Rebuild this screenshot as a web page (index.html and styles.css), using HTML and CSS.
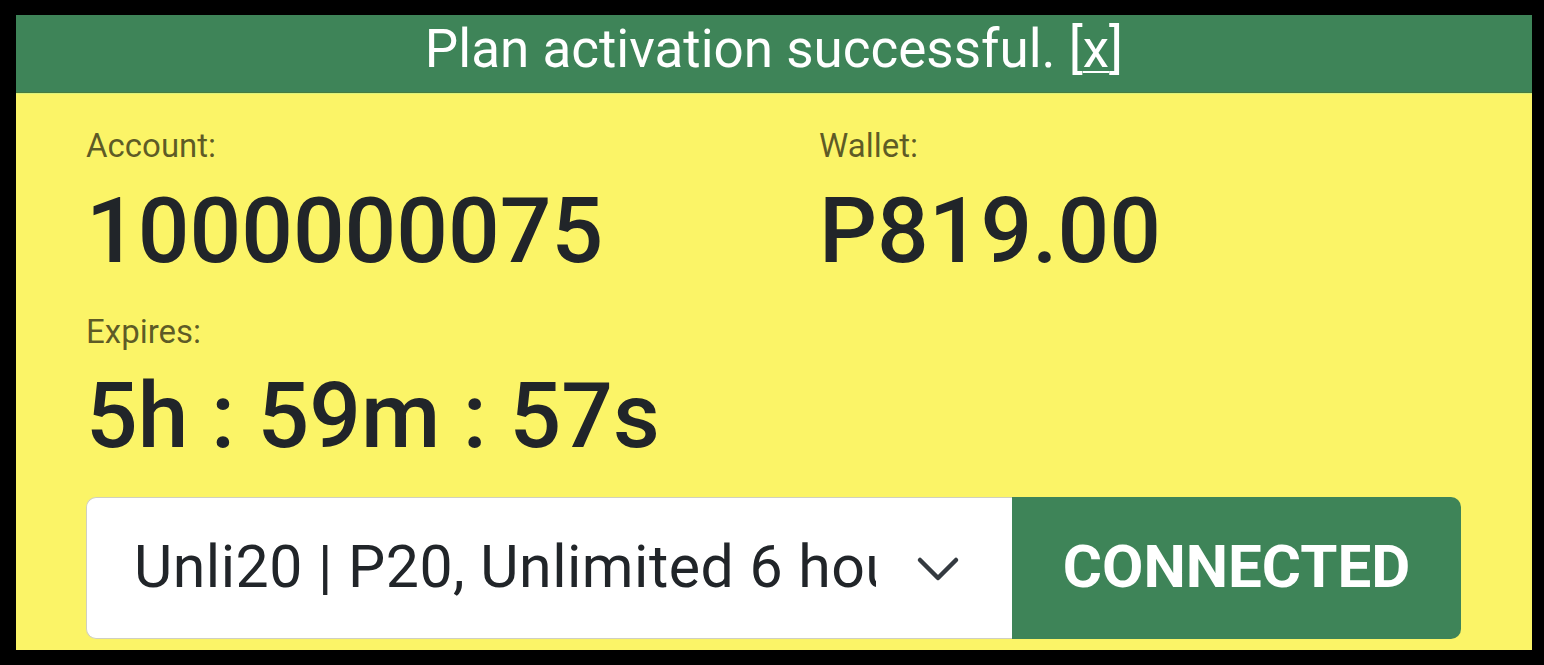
FILE: index.html
```html
<!DOCTYPE html>
<html lang="en">
<head>
<meta charset="utf-8">
<title>Plan</title>
<link rel="stylesheet" href="styles.css">
</head>
<body>
<div class="frame">
  <div class="banner">Plan activation successful. [<span class="close">x</span>]</div>
  <div class="content">
    <div class="info-grid">
      <div class="cell">
        <div class="label">Account:</div>
        <div class="value">1000000075</div>
      </div>
      <div class="cell">
        <div class="label">Wallet:</div>
        <div class="value">P819.00</div>
      </div>
      <div class="cell">
        <div class="label">Expires:</div>
        <div class="value">5h : 59m : 57s</div>
      </div>
    </div>
    <div class="input-group">
      <div class="select">
        <span class="select-text">Unli20 | P20, Unlimited 6 hours</span>
        <svg class="chevron" width="44" height="28" viewBox="0 0 44 28"><path d="M4 5 L22 23 L40 5" fill="none" stroke="#343a40" stroke-width="4.5" stroke-linecap="round" stroke-linejoin="round"/></svg>
      </div>
      <div class="btn">CONNECTED</div>
    </div>
  </div>
</div>
</body>
</html>
```
FILE: styles.css
```css
html, body {
  margin: 0;
  padding: 0;
  background: #000;
  height: 665px;
  overflow: hidden;
}
body {
  font-family: Roboto, "Liberation Sans", sans-serif;
}
.frame {
  margin: 15px 0 0 16px;
  width: 1516px;
  height: 635px;
  background: #fbf467;
  display: flex;
  flex-direction: column;
}
.banner {
  height: 68px;
  padding-bottom: 9px;
  line-height: 68px;
  background: #3e8458;
  border-bottom: 1px solid #4a7a3c;
  color: #fff;
  font-size: 53px;
  text-align: center;
  box-shadow: 0 1px 0 #d9f27e;
}
.close {
  text-decoration: underline;
  text-decoration-thickness: 2px;
  text-underline-offset: 4px;
}
.content {
  padding: 28px 70px 0 70px;
}
.info-grid {
  display: grid;
  grid-template-columns: 733px 1fr;
  row-gap: 21px;
}
.label {
  font-size: 33px;
  line-height: 49.5px;
  color: rgba(0, 0, 0, 0.64);
}
.value {
  margin-top: 6px;
  font-size: 91px;
  line-height: 109px;
  font-weight: 500;
  color: #212529;
}
.input-group {
  margin-top: 26px;
  display: flex;
  height: 142px;
}
.select {
  width: 926px;
  box-sizing: border-box;
  background: #fff;
  border: 1px solid #d0d0c0;
  border-right: none;
  border-radius: 10px 0 0 10px;
  display: flex;
  align-items: center;
  padding-left: 47px;
  padding-bottom: 3px;
  position: relative;
}
.select-text {
  font-size: 59px;
  letter-spacing: 0.5px;
  color: #212529;
  white-space: nowrap;
  overflow: hidden;
  width: 742px;
}
.chevron {
  position: absolute;
  left: 829px;
  top: 57px;
}
.btn {
  width: 449px;
  box-sizing: border-box;
  background: #3e8458;
  border-radius: 0 10px 10px 0;
  color: #fff;
  font-size: 60px;
  font-weight: 700;
  display: flex;
  align-items: center;
  justify-content: center;
  padding-bottom: 3px;
}
```
